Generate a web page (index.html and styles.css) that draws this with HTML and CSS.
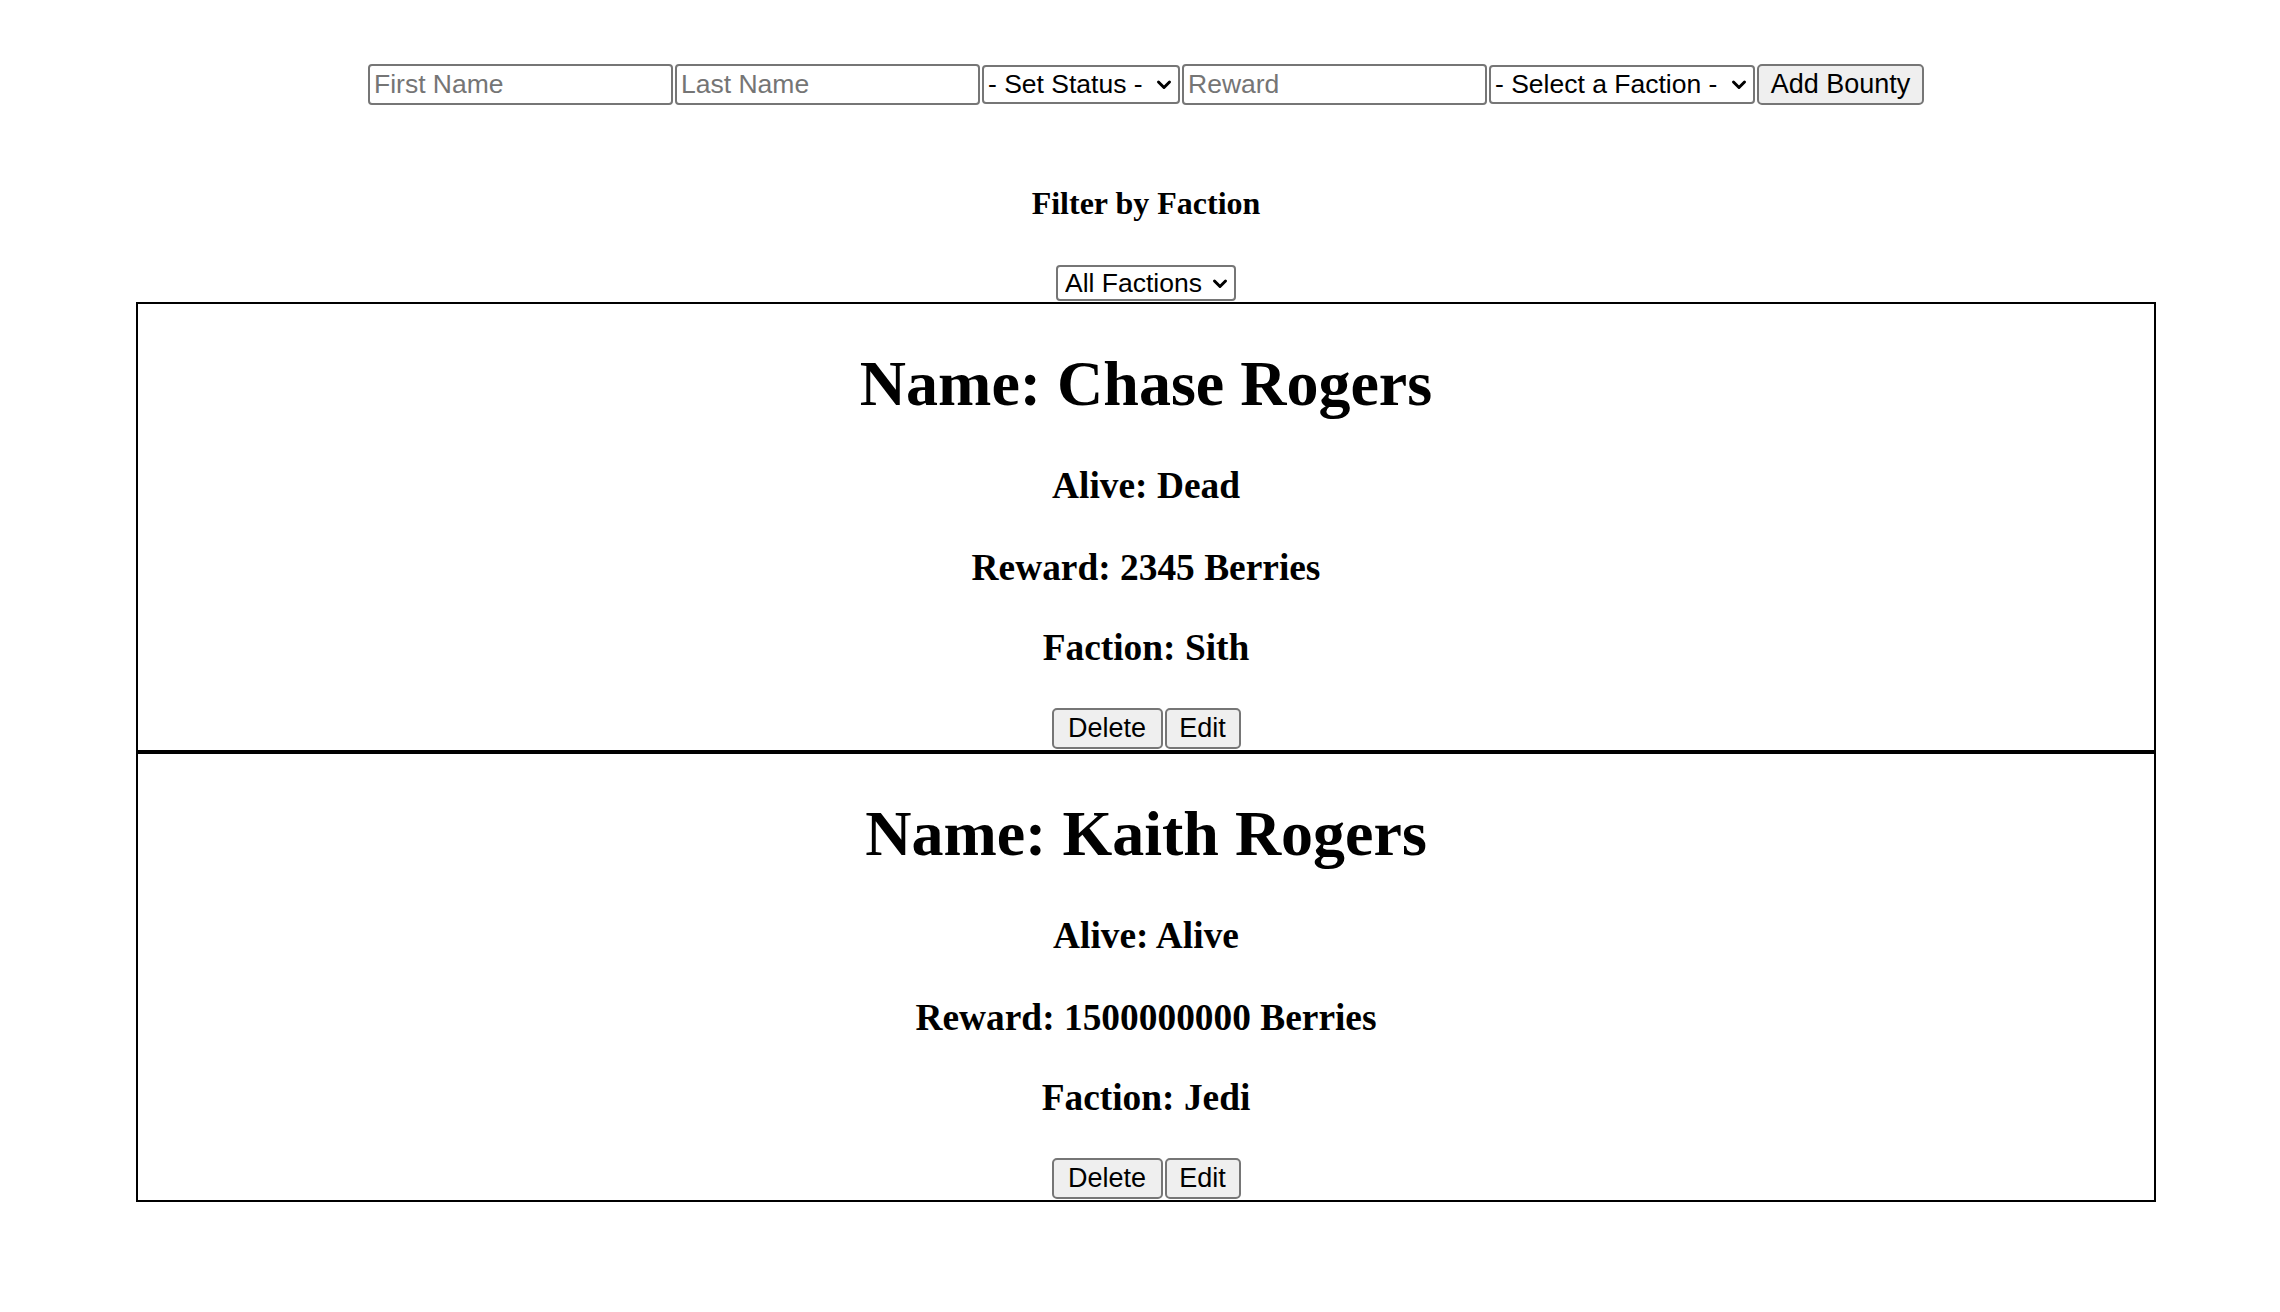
FILE: index.html
```html
<!DOCTYPE html>
<html lang="en">
<head>
<meta charset="utf-8">
<title>Bounties</title>
<link rel="stylesheet" href="styles.css">
</head>
<body>
<div class="app">
  <form class="add-form">
    <input class="field text-field" type="text" placeholder="First Name">
    <input class="field text-field" type="text" placeholder="Last Name">
    <span class="select-wrap status-wrap">
      <select class="field select-field"><option>- Set Status -</option></select>
      <svg class="chevron" viewBox="0 0 16 12" aria-hidden="true"><path d="M2.5 3 L8 8.5 L13.5 3" fill="none" stroke="#000" stroke-width="3" stroke-linecap="round" stroke-linejoin="round"/></svg>
    </span>
    <input class="field text-field" type="text" placeholder="Reward">
    <span class="select-wrap faction-wrap">
      <select class="field select-field"><option>- Select a Faction -</option></select>
      <svg class="chevron" viewBox="0 0 16 12" aria-hidden="true"><path d="M2.5 3 L8 8.5 L13.5 3" fill="none" stroke="#000" stroke-width="3" stroke-linecap="round" stroke-linejoin="round"/></svg>
    </span>
    <button class="btn add-btn" type="button">Add Bounty</button>
  </form>

  <h4 class="filter-title">Filter by Faction</h4>
  <div class="filter-row">
    <span class="select-wrap filter-wrap">
      <select class="field select-field filter-select"><option>All Factions</option></select>
      <svg class="chevron" viewBox="0 0 16 12" aria-hidden="true"><path d="M2.5 3 L8 8.5 L13.5 3" fill="none" stroke="#000" stroke-width="3" stroke-linecap="round" stroke-linejoin="round"/></svg>
    </span>
  </div>

  <div class="cards">
    <div class="card">
      <h1 class="card-name">Name: Chase Rogers</h1>
      <h3 class="card-line card-alive">Alive: Dead</h3>
      <h3 class="card-line card-reward">Reward: 2345 Berries</h3>
      <h3 class="card-line card-faction">Faction: Sith</h3>
      <div class="card-actions">
        <button class="btn del-btn" type="button">Delete</button>
        <button class="btn edit-btn" type="button">Edit</button>
      </div>
    </div>
    <div class="card">
      <h1 class="card-name">Name: Kaith Rogers</h1>
      <h3 class="card-line card-alive">Alive: Alive</h3>
      <h3 class="card-line card-reward">Reward: 1500000000 Berries</h3>
      <h3 class="card-line card-faction">Faction: Jedi</h3>
      <div class="card-actions">
        <button class="btn del-btn" type="button">Delete</button>
        <button class="btn edit-btn" type="button">Edit</button>
      </div>
    </div>
  </div>
</div>
</body>
</html>
```

FILE: styles.css
```css
html, body {
  margin: 0;
  padding: 0;
  background: #ffffff;
}

body {
  font-family: "Liberation Serif", "Times New Roman", serif;
  color: #000;
}

.app {
  display: flex;
  flex-direction: column;
  padding-left: 12px;
}

/* ---------- add form ---------- */
.add-form {
  display: flex;
  justify-content: center;
  align-items: center;
  gap: 2px;
  padding: 64px 0 0;
  margin: 0;
  height: 41px;
}

.field {
  box-sizing: border-box;
  font-family: "Liberation Sans", Arial, sans-serif;
  font-size: 26.5px;
  color: #000;
  background: #fff;
  border: 2px solid #767676;
  border-radius: 4px;
  margin: 0;
  outline: none;
}

.text-field {
  width: 305px;
  height: 41px;
  padding: 0 4px;
}

.text-field::placeholder {
  color: #757575;
}

.select-wrap {
  position: relative;
  display: inline-flex;
}

.select-field {
  -webkit-appearance: none;
  appearance: none;
  height: 39px;
  padding: 0 30px 0 4px;
  line-height: 35px;
}

.status-wrap .select-field { width: 198px; }
.faction-wrap .select-field { width: 266px; }

.chevron {
  position: absolute;
  right: 8px;
  top: 50%;
  width: 16px;
  height: 12px;
  margin-top: -6px;
  pointer-events: none;
}

.btn {
  box-sizing: border-box;
  font-family: "Liberation Sans", Arial, sans-serif;
  font-size: 27px;
  color: #000;
  background: #efefef;
  border: 2px solid #767676;
  border-radius: 5px;
  height: 41px;
  padding: 0;
  margin: 0;
  text-align: center;
}

.add-btn { width: 167px; }

/* ---------- filter ---------- */
.filter-title {
  font-size: 32px;
  font-weight: bold;
  line-height: 37px;
  text-align: center;
  margin: 80px 0 0;
}

.filter-row {
  display: flex;
  justify-content: center;
  margin-top: 43px;
  height: 37px;
}

.filter-select {
  width: 180px;
  height: 36px;
  line-height: 32px;
  padding-left: 7px;
}

/* ---------- cards ---------- */
.cards {
  display: flex;
  flex-direction: column;
  align-self: center;
  width: 2020px;
}

.card {
  box-sizing: border-box;
  border: 2px solid #000;
  height: 450px;
  text-align: center;
  display: flex;
  flex-direction: column;
  align-items: center;
}

.card-name {
  font-size: 64px;
  font-weight: bold;
  line-height: 73px;
  margin: 43px 0 0;
}

.card-line {
  font-size: 37.4px;
  font-weight: bold;
  line-height: 43px;
  margin: 0;
}

.card-alive { margin-top: 44px; }
.card-reward { margin-top: 39px; }
.card-faction { margin-top: 37px; }

.card-actions {
  display: flex;
  justify-content: center;
  gap: 2px;
  margin-top: 39px;
}

.del-btn { width: 111px; }
.edit-btn { width: 76px; }
```
